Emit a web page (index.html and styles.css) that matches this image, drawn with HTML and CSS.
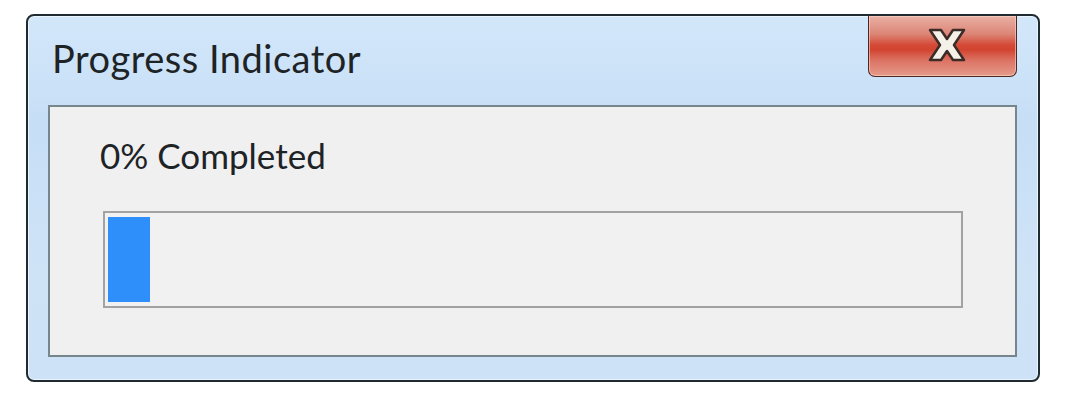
FILE: index.html
```html
<!DOCTYPE html>
<html lang="en">
<head>
<meta charset="utf-8">
<title>Progress Indicator</title>
<link rel="stylesheet" href="styles.css">
</head>
<body>
<div class="window">
  <div class="titlebar">
    <div class="title">Progress Indicator</div>
    <div class="close">
      <svg class="close-x" width="38" height="34" viewBox="0 0 38 34">
        <polygon points="2,2 13,2 19,11 25,2 36,2 26,17 36,32 25,32 19,23 13,32 2,32 12,17" fill="#f3f1e8" stroke="#3d2b27" stroke-width="2.5" stroke-linejoin="round"/>
      </svg>
    </div>
  </div>
  <div class="panel">
    <div class="label">0% Completed</div>
    <div class="progress">
      <div class="fill" style="width:42px"></div>
    </div>
  </div>
</div>
</body>
</html>
```
FILE: styles.css
```css
html, body {
  margin: 0;
  padding: 0;
  background: #ffffff;
}
body {
  padding: 14px 0 0 26px;
  font-family: "Lato", "Open Sans", sans-serif;
}
.window {
  box-sizing: border-box;
  width: 1014px;
  height: 368px;
  border: 2px solid #1f2b30;
  border-radius: 8px;
  background: linear-gradient(180deg, #d3e7fa 0%, #c6def6 30%, #cfe3f7 70%, #cde2f6 100%);
  box-shadow: inset 0 0 0 1px #eaf4fd;
  display: flex;
  flex-direction: column;
}
.titlebar {
  display: flex;
  justify-content: space-between;
  align-items: flex-start;
  height: 89px;
}
.title {
  margin: 23px 0 0 24px;
  font-size: 38px;
  line-height: 38px;
  letter-spacing: 0.5px;
  color: #1e2326;
}
.close {
  box-sizing: border-box;
  width: 149px;
  height: 61px;
  margin-right: 21px;
  border: 1px solid #4d2721;
  border-top: none;
  border-radius: 0 0 7px 7px;
  background: linear-gradient(180deg, #e9b0a4 0%, #dc8677 30%, #d44b37 48%, #d24430 56%, #dc7566 75%, #e69a8b 100%);
  box-shadow: inset 0 0 0 1px rgba(255, 220, 210, 0.55);
  display: flex;
  align-items: center;
  justify-content: center;
}
.close-x {
  display: block;
  margin: 0 0 2px 8px;
}
.panel {
  box-sizing: border-box;
  height: 252px;
  margin: 0 21px 0 20px;
  border: 2px solid #77858d;
  background: #f0f0f0;
  padding: 31px 0 0 50px;
}
.label {
  font-size: 35px;
  line-height: 35px;
  color: #1e2326;
}
.progress {
  box-sizing: border-box;
  width: 860px;
  height: 97px;
  margin: 38px 0 0 3px;
  border: 2px solid #a2a2a2;
  background: #f1f1f1;
  padding: 4px 3px;
}
.fill {
  height: 100%;
  background: #2f8ffa;
}
```
